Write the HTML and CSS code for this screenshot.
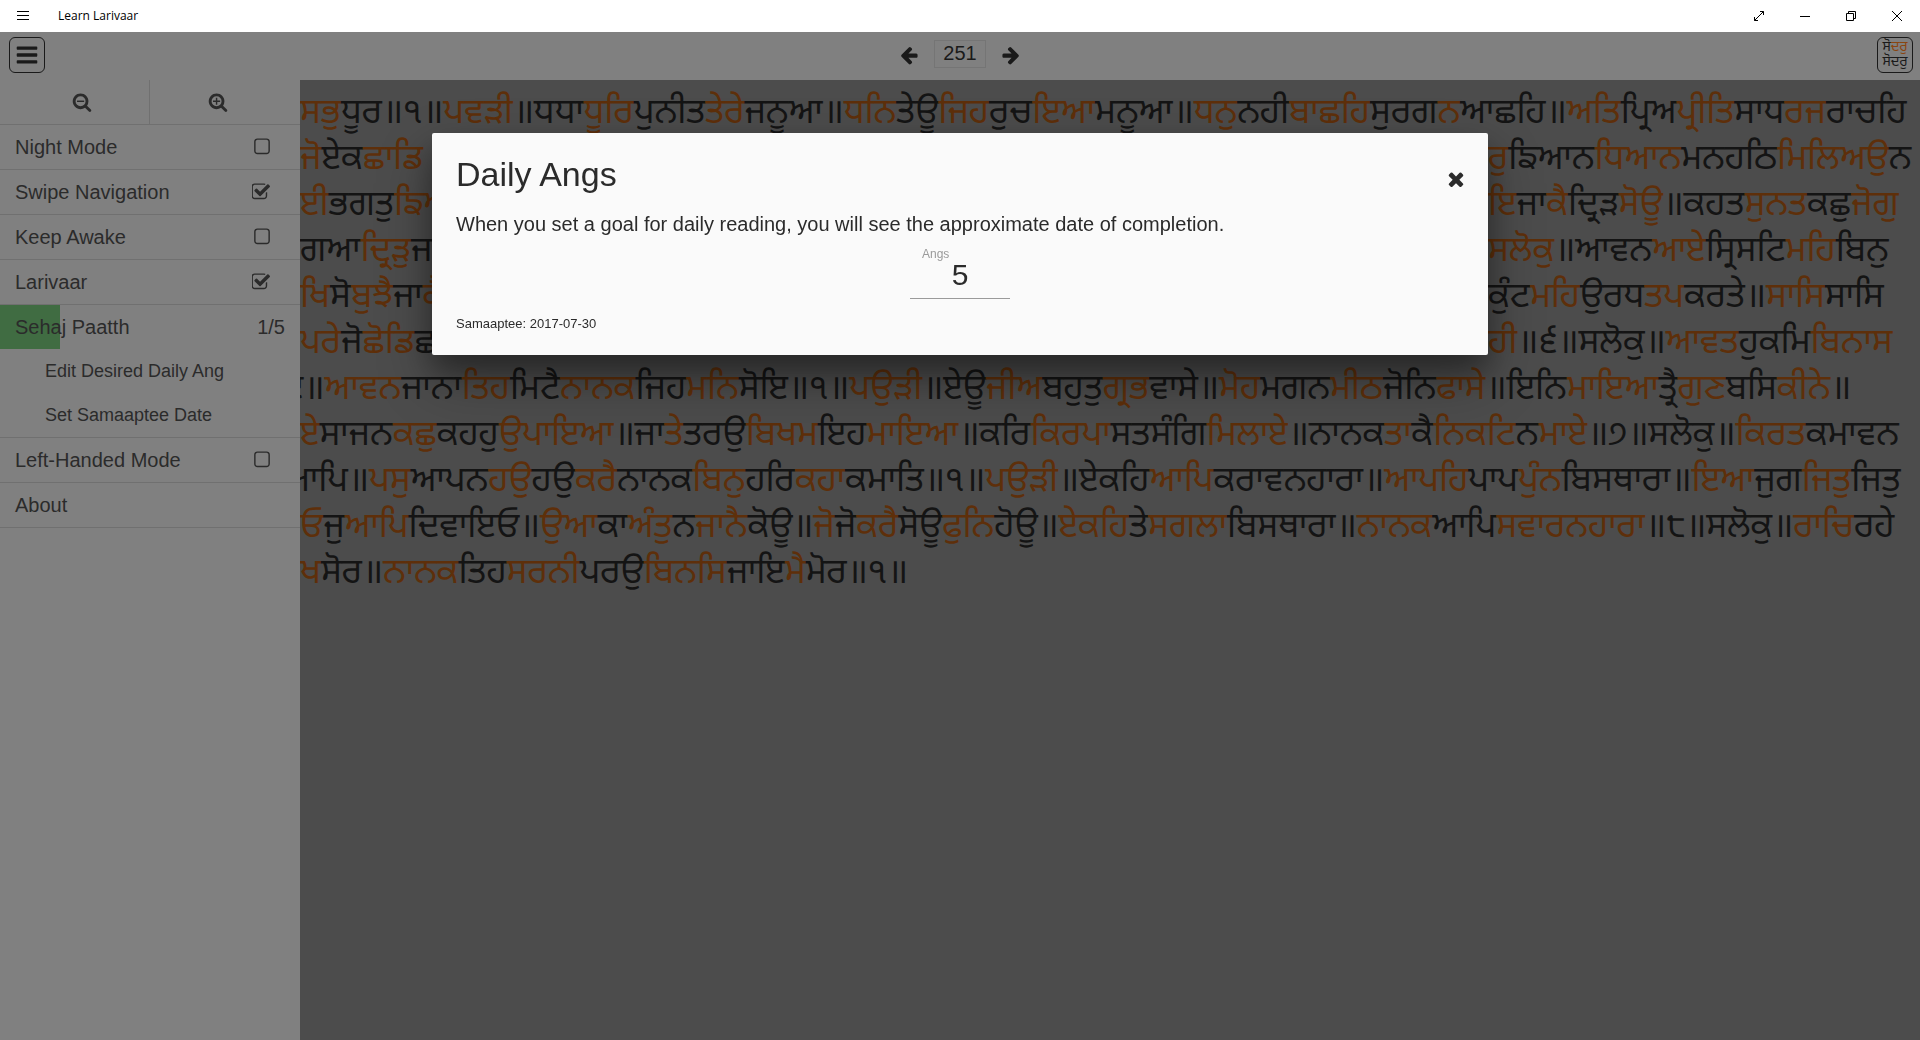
FILE: index.html
```html
<!DOCTYPE html>
<html lang="en">
<head>
<meta charset="utf-8">
<title>Learn Larivaar</title>
<meta name="viewport" content="width=device-width, initial-scale=1">
<link rel="stylesheet" href="styles.css">
</head>
<body>
<svg class="sprite" aria-hidden="true">
  <symbol id="bars" viewBox="0 0 1792 1792"><path d="M1664 1344v128q0 26-19 45t-45 19h-1408q-26 0-45-19t-19-45v-128q0-26 19-45t45-19h1408q26 0 45 19t19 45zm0-512v128q0 26-19 45t-45 19h-1408q-26 0-45-19t-19-45v-128q0-26 19-45t45-19h1408q26 0 45 19t19 45zm0-512v128q0 26-19 45t-45 19h-1408q-26 0-45-19t-19-45v-128q0-26 19-45t45-19h1408q26 0 45 19t19 45z"/></symbol>
  <symbol id="arrow" viewBox="0 0 1792 1792"><path d="M1664 896v128q0 53-32.5 90.5t-84.5 37.5h-704l293 294q38 36 38 90t-38 90l-75 76q-37 37-90 37-52 0-91-37l-651-652q-37-37-37-90 0-52 37-91l651-650q38-38 91-38 52 0 90 38l75 74q38 38 38 91t-38 91l-293 293h704q52 0 84.5 37.5t32.5 90.5z"/></symbol>
  <symbol id="square" viewBox="0 0 1792 1792"><path d="M1312 256H480q-66 0-113 47t-47 113v832q0 66 47 113t113 47h832q66 0 113-47t47-113V416q0-66-47-113t-113-47zm288 160v832q0 119-84.500 203.500T1312 1536H480q-119 0-203.500-84.500T192 1248V416q0-119 84.500-203.500T480 128h832q119 0 203.500 84.500T1600 416z"/></symbol>
  <symbol id="checked" viewBox="112 0 1792 1792" overflow="visible"><path d="M1472 930v318q0 119-84.500 203.500t-203.500 84.500h-832q-119 0-203.500-84.500t-84.500-203.500v-832q0-119 84.500-203.500t203.500-84.500h832q63 0 117 25 15 7 18 23 3 17-9 29l-49 49q-10 10-23 10-3 0-9-2-23-6-45-6h-832q-66 0-113 47t-47 113v832q0 66 47 113t113 47h832q66 0 113-47t47-113v-254q0-13 9-22l64-64q10-10 23-10 6 0 12 3 20 8 20 29zm231-489l-814 814q-24 24-57 24t-57-24l-430-430q-24-24-24-57t24-57l110-110q24-24 57-24t57 24l263 263 647-647q24-24 57-24t57 24l110 110q24 24 24 57t-24 57z"/></symbol>
  <symbol id="lens" viewBox="0 0 1792 1792"><path d="M1216 832q0-185-131.500-316.500t-316.500-131.500-316.500 131.500-131.500 316.500 131.500 316.500 316.500 131.500 316.500-131.500 131.500-316.500zm512 832q0 53-37.500 90.500t-90.500 37.500q-54 0-90-38l-343-342q-179 124-399 124-143 0-273.500-55.500t-225-150-150-225-55.500-273.500 55.500-273.500 150-225 225-150 273.500-55.500 273.500 55.500 225 150 150 225 55.500 273.500q0 220-124 399l343 343q37 37 37 90z"/></symbol>
  <symbol id="times" viewBox="0 0 1792 1792"><path d="M1490 1322q0 40-28 68l-136 136q-28 28-68 28t-68-28l-294-294-294 294q-28 28-68 28t-68-28l-136-136q-28-28-28-68t28-68l294-294-294-294q-28-28-28-68t28-68l136-136q28-28 68-28t68 28l294 294 294-294q28-28 68-28t68 28l136 136q28 28 28 68t-28 68l-294 294 294 294q28 28 28 68z"/></symbol>
</svg>

<header class="titlebar">
  <button class="win" aria-label="Menu"><svg width="12" height="10" viewBox="0 0 12 10"><path d="M0 .5h12M0 4.500h12M0 8.500h12"/></svg></button>
  <span class="app-name">Learn Larivaar</span>
  <button class="win" aria-label="Full screen"><svg width="10" height="10" viewBox="0 0 10 10"><path d="M.5 9.500l9-9M6 .5h3.500v3.500M.5 6v3.500h3.500"/></svg></button>
  <button class="win" aria-label="Minimize"><svg width="10" height="10" viewBox="0 0 10 10"><path d="M0 5.500h10"/></svg></button>
  <button class="win" aria-label="Restore"><svg width="10" height="10" viewBox="0 0 10 10"><path d="M.5 2.500h7v7h-7zM2.500 2.500v-2h7v7h-2"/></svg></button>
  <button class="win" aria-label="Close window"><svg width="10" height="10" viewBox="0 0 10 10"><path d="M0 0l10 10M10 0l-10 10"/></svg></button>
</header>

<nav class="toolbar">
  <button class="boxed" aria-label="Toggle menu"><svg class="i24"><use href="#bars"/></svg></button>
  <div class="pager">
    <button class="plain" aria-label="Previous ang"><svg class="i20"><use href="#arrow"/></svg></button>
    <input class="ang" type="text" value="251" aria-label="Ang">
    <button class="plain flip" aria-label="Next ang"><svg class="i20"><use href="#arrow"/></svg></button>
  </div>
  <button class="boxed toggle" aria-label="Toggle larivaar" lang="pa"><span>ਸੋ<b>ਦਰੁ</b></span><span>ਸੋਦਰੁ</span></button>
</nav>

<div class="main">
  <aside class="side">
    <div class="zoom">
      <button aria-label="Smaller text"><svg class="i20" viewBox="0 0 1792 1792"><use href="#lens"/><path d="M448 768h640v128H448z"/></svg></button>
      <button aria-label="Larger text"><svg class="i20" viewBox="0 0 1792 1792"><use href="#lens"/><path d="M448 768h256V512h128v256h256v128H832v256H704V896H448z"/></svg></button>
    </div>
    <label class="row">Night Mode<span class="tick"><input type="checkbox"><svg class="i20 off"><use href="#square"/></svg><svg class="i20 on"><use href="#checked"/></svg></span></label>
    <label class="row">Swipe Navigation<span class="tick"><input type="checkbox" checked><svg class="i20 off"><use href="#square"/></svg><svg class="i20 on"><use href="#checked"/></svg></span></label>
    <label class="row">Keep Awake<span class="tick"><input type="checkbox"><svg class="i20 off"><use href="#square"/></svg><svg class="i20 on"><use href="#checked"/></svg></span></label>
    <label class="row">Larivaar<span class="tick"><input type="checkbox" checked><svg class="i20 off"><use href="#square"/></svg><svg class="i20 on"><use href="#checked"/></svg></span></label>
    <div class="group">
      <a class="row goal" href="#sehaj">Sehaj Paatth<span>1/5</span></a>
      <a class="row sub" href="#daily">Edit Desired Daily Ang</a>
      <a class="row sub" href="#date">Set Samaaptee Date</a>
    </div>
    <label class="row">Left-Handed Mode<span class="tick"><input type="checkbox"><svg class="i20 off"><use href="#square"/></svg><svg class="i20 on"><use href="#checked"/></svg></span></label>
    <a class="row" href="#about">About</a>
  </aside>

  <main class="reader" lang="pa">
    <p><b>ਸਭੁ</b>ਧੂਰ॥੧॥<b>ਪਵੜੀ</b>॥ਧਧਾ<b>ਧੂਰਿ</b>ਪੁਨੀਤ<b>ਤੇਰੇ</b>ਜਨੂਆ॥<b>ਧਨਿ</b>ਤੇਊ<b>ਜਿਹ</b>ਰੁਚ<b>ਇਆ</b>ਮਨੂਆ॥<b>ਧਨੁ</b>ਨਹੀ<b>ਬਾਛਹਿ</b>ਸੁਰਗ<b>ਨ</b>ਆਛਹਿ॥<b>ਅਤਿ</b>ਪ੍ਰਿਅ<b>ਪ੍ਰੀਤਿ</b>ਸਾਧ<b>ਰਜ</b>ਰਾਚਹਿ</p>
    <p class="split"><span><b>ਜੋ</b>ਏਕ<b>ਛਾਡਿ</b></span><span><b>ਰੁ</b>ਙਿਆਨ<b>ਧਿਆਨ</b>ਮਨਹਠਿ<b>ਮਿਲਿਅਉ</b>ਨ</span></p>
    <p class="split"><span><b>ਈ</b>ਭਗਤੁ<b>ਙਿਆ</b></span><span><b>ਇ</b>ਜਾ<b>ਕੈ</b>ਦ੍ਰਿੜ<b>ਸੋਊ</b>॥ਕਹਤ<b>ਸੁਨਤ</b>ਕਛੁ<b>ਜੋਗੁ</b></span></p>
    <p class="split"><span>ਗਆ<b>ਦ੍ਰਿੜੁ</b>ਜਾ</span><span><b>ਸਲੋਕੁ</b>॥ਆਵਨ<b>ਆਏ</b>ਸ੍ਰਿਸਟਿ<b>ਮਹਿ</b>ਬਿਨੁ</span></p>
    <p class="split"><span><b>ਖਿ</b>ਸੋ<b>ਬੁਝੈ</b>ਜਾ<b>ਕੈ</b></span><span>ਕੁੰਟ<b>ਮਹਿ</b>ਉਰਧ<b>ਤਪ</b>ਕਰਤੇ॥<b>ਸਾਸਿ</b>ਸਾਸਿ</span></p>
    <p class="split"><span><b>ਪਰੇ</b>ਜੋ<b>ਛੋਡਿ</b>ਛ</span><span><b>ਹੀ</b>॥੬॥ਸਲੋਕੁ॥<b>ਆਵਤ</b>ਹੁਕਮਿ<b>ਬਿਨਾਸ</b></span></p>
    <p class="cut">ੲ॥<b>ਆਵਨ</b>ਜਾਨਾ<b>ਤਿਹ</b>ਮਿਟੈ<b>ਨਾਨਕ</b>ਜਿਹ<b>ਮਨਿ</b>ਸੋਇ॥੧॥<b>ਪਉੜੀ</b>॥ਏਊ<b>ਜੀਅ</b>ਬਹੁਤੁ<b>ਗ੍ਰਭ</b>ਵਾਸੇ॥<b>ਮੋਹ</b>ਮਗਨ<b>ਮੀਠ</b>ਜੋਨਿ<b>ਫਾਸੇ</b>॥ਇਨਿ<b>ਮਾਇਆ</b>ਤ੍ਰੈ<b>ਗੁਣ</b>ਬਸਿ<b>ਕੀਨੇ</b>॥</p>
    <p><b>ਏ</b>ਸਾਜਨ<b>ਕਛੁ</b>ਕਹਹੁ<b>ਉਪਾਇਆ</b>॥ਜਾ<b>ਤੇ</b>ਤਰਉ<b>ਬਿਖਮ</b>ਇਹ<b>ਮਾਇਆ</b>॥ਕਰਿ<b>ਕਿਰਪਾ</b>ਸਤਸੰਗਿ<b>ਮਿਲਾਏ</b>॥ਨਾਨਕ<b>ਤਾ</b>ਕੈ<b>ਨਿਕਟਿ</b>ਨ<b>ਮਾਏ</b>॥੭॥ਸਲੋਕੁ॥<b>ਕਿਰਤ</b>ਕਮਾਵਨ</p>
    <p class="cut">ਆਪਿ॥<b>ਪਸੁ</b>ਆਪਨ<b>ਹਉ</b>ਹਉ<b>ਕਰੈ</b>ਨਾਨਕ<b>ਬਿਨੁ</b>ਹਰਿ<b>ਕਹਾ</b>ਕਮਾਤਿ॥੧॥<b>ਪਉੜੀ</b>॥ਏਕਹਿ<b>ਆਪਿ</b>ਕਰਾਵਨਹਾਰਾ॥<b>ਆਪਹਿ</b>ਪਾਪ<b>ਪੁੰਨ</b>ਬਿਸਥਾਰਾ॥<b>ਇਆ</b>ਜੁਗ<b>ਜਿਤੁ</b>ਜਿਤੁ</p>
    <p><b>ਓ</b>ਜੁ<b>ਆਪਿ</b>ਦਿਵਾਇਓ॥<b>ਉਆ</b>ਕਾ<b>ਅੰਤੁ</b>ਨ<b>ਜਾਨੈ</b>ਕੋਊ॥<b>ਜੋ</b>ਜੋ<b>ਕਰੈ</b>ਸੋਊ<b>ਫੁਨਿ</b>ਹੋਊ॥<b>ਏਕਹਿ</b>ਤੇ<b>ਸਗਲਾ</b>ਬਿਸਥਾਰਾ॥<b>ਨਾਨਕ</b>ਆਪਿ<b>ਸਵਾਰਨਹਾਰਾ</b>॥੮॥ਸਲੋਕੁ॥<b>ਰਾਚਿ</b>ਰਹੇ</p>
    <p><b>ਖ</b>ਸੋਰ॥<b>ਨਾਨਕ</b>ਤਿਹ<b>ਸਰਨੀ</b>ਪਰਉ<b>ਬਿਨਸਿ</b>ਜਾਇ<b>ਮੈ</b>ਮੋਰ॥੧॥</p>
  </main>
</div>

<section class="modal" role="dialog" aria-labelledby="modal-title">
  <div class="modal-head">
    <h1 id="modal-title">Daily Angs</h1>
    <button class="plain" aria-label="Close"><svg class="i22"><use href="#times"/></svg></button>
  </div>
  <p class="lead">When you set a goal for daily reading, you will see the approximate date of completion.</p>
  <div class="field">
    <label for="angs">Angs</label>
    <input id="angs" type="text" inputmode="numeric" value="5">
  </div>
  <p class="note">Samaaptee: 2017-07-30</p>
</section>
</body>
</html>
```
FILE: styles.css
```css
* { box-sizing: border-box; }
body {
  margin: 0;
  min-height: 100vh;
  display: flex;
  flex-direction: column;
  background: #808080;
  color: #2b2b2b;
  font: 20px/24px "Liberation Sans", Arial, sans-serif;
}
button, input { font: inherit; color: inherit; margin: 0; padding: 0; border: 0; background: none; }
button { display: flex; align-items: center; justify-content: center; cursor: pointer; }
a { color: inherit; text-decoration: none; }
svg { display: block; fill: currentColor; }
.sprite { position: absolute; width: 0; height: 0; }
.i20 { width: 20px; height: 20px; }
.i22 { width: 22px; height: 22px; }
.i24 { width: 24px; height: 24px; }

.titlebar { display: flex; align-items: stretch; height: 32px; background: #fff; color: #000; font: 12px/32px "Open Sans", sans-serif; }
.titlebar svg { fill: none; stroke: #000; stroke-width: 1px; }
.win { width: 46px; }
.app-name { flex: 1; padding-left: 12px; }

.toolbar { display: flex; align-items: center; justify-content: space-between; height: 48px; padding: 0 7px 2px 9px; color: #1a1a1a; }
.boxed { width: 36px; height: 36px; border: 1px solid #1a1a1a; border-radius: 6px; }
.toggle { flex-direction: column; font: 14px/15px "Noto Sans Gurmukhi", "Noto Sans", sans-serif; }
.toggle b { font-weight: 400; color: #8a4510; }
.pager { display: flex; align-items: center; gap: 15px; margin-right: 2px; }
.flip svg { transform: scaleX(-1); }
.ang { width: 52px; height: 28px; margin-bottom: 3px; border: 1px solid #757575; text-align: center; }

.main { flex: 1; display: flex; }
.side { flex: none; width: 300px; }
.zoom { display: grid; grid-template-columns: 1fr 1fr; height: 45px; border-bottom: 1px solid #707070; }
.zoom button:first-child { padding-left: 15px; border-right: 1px solid #707070; }
.zoom button:last-child { padding-right: 15px; }
.row { display: flex; align-items: center; justify-content: space-between; height: 45px; padding: 0 15px; border-bottom: 1px solid #707070; }
.tick { position: relative; margin-right: 13px; }
.tick input { position: absolute; inset: 0; width: 20px; height: 20px; opacity: 0; }
.tick .on, .tick input:checked ~ .off { display: none; }
.tick input:checked ~ .on { display: block; }
.group { border-bottom: 1px solid #707070; }
.group .row { height: 44px; border: 0; }
.goal { background: linear-gradient(90deg, #406c42 20%, transparent 20%); }
.row.sub { padding-left: 45px; font-size: 18px; }

.reader { flex: 1; min-width: 0; overflow: hidden; padding-top: 12px; background: #4c4c4c; color: #141414; font: 35px/46px "Noto Sans Gurmukhi", "Noto Sans", sans-serif; white-space: nowrap; }
.reader p { margin: 0; height: 46px; }
.reader b { font-weight: 400; color: #5e2f0a; }
.reader .cut { margin-left: -16px; }
.reader .split { display: grid; grid-template-columns: calc(22.5vw - 300px) 1fr; column-gap: 55vw; }

.modal { position: fixed; top: 133px; left: 22.5vw; right: 22.5vw; padding: 23px 24px 22px; border-radius: 2px; background: #fafafa; box-shadow: 0 16px 28px rgba(0,0,0,.3), 0 24px 56px rgba(0,0,0,.3); }
.modal-head { display: flex; justify-content: space-between; align-items: center; height: 36px; }
.modal h1 { margin: 0; font-size: 34px; line-height: 36px; font-weight: 400; }
.modal p { margin: 0; }
.modal-head button { padding-top: 10px; margin-right: -3px; }
.modal .lead { margin-top: 20px; }
.field { width: 100px; margin: 12px auto 0; border-bottom: 1px solid #9a9a9a; }
.field label { display: block; padding-left: 12px; font-size: 12px; line-height: 12px; color: #9a9a9a; }
.field input { display: block; width: 100%; height: 38px; padding-bottom: 8px; font-size: 30px; text-align: center; }
.modal .note { margin-top: 16px; font-size: 13px; line-height: 18px; }
```
